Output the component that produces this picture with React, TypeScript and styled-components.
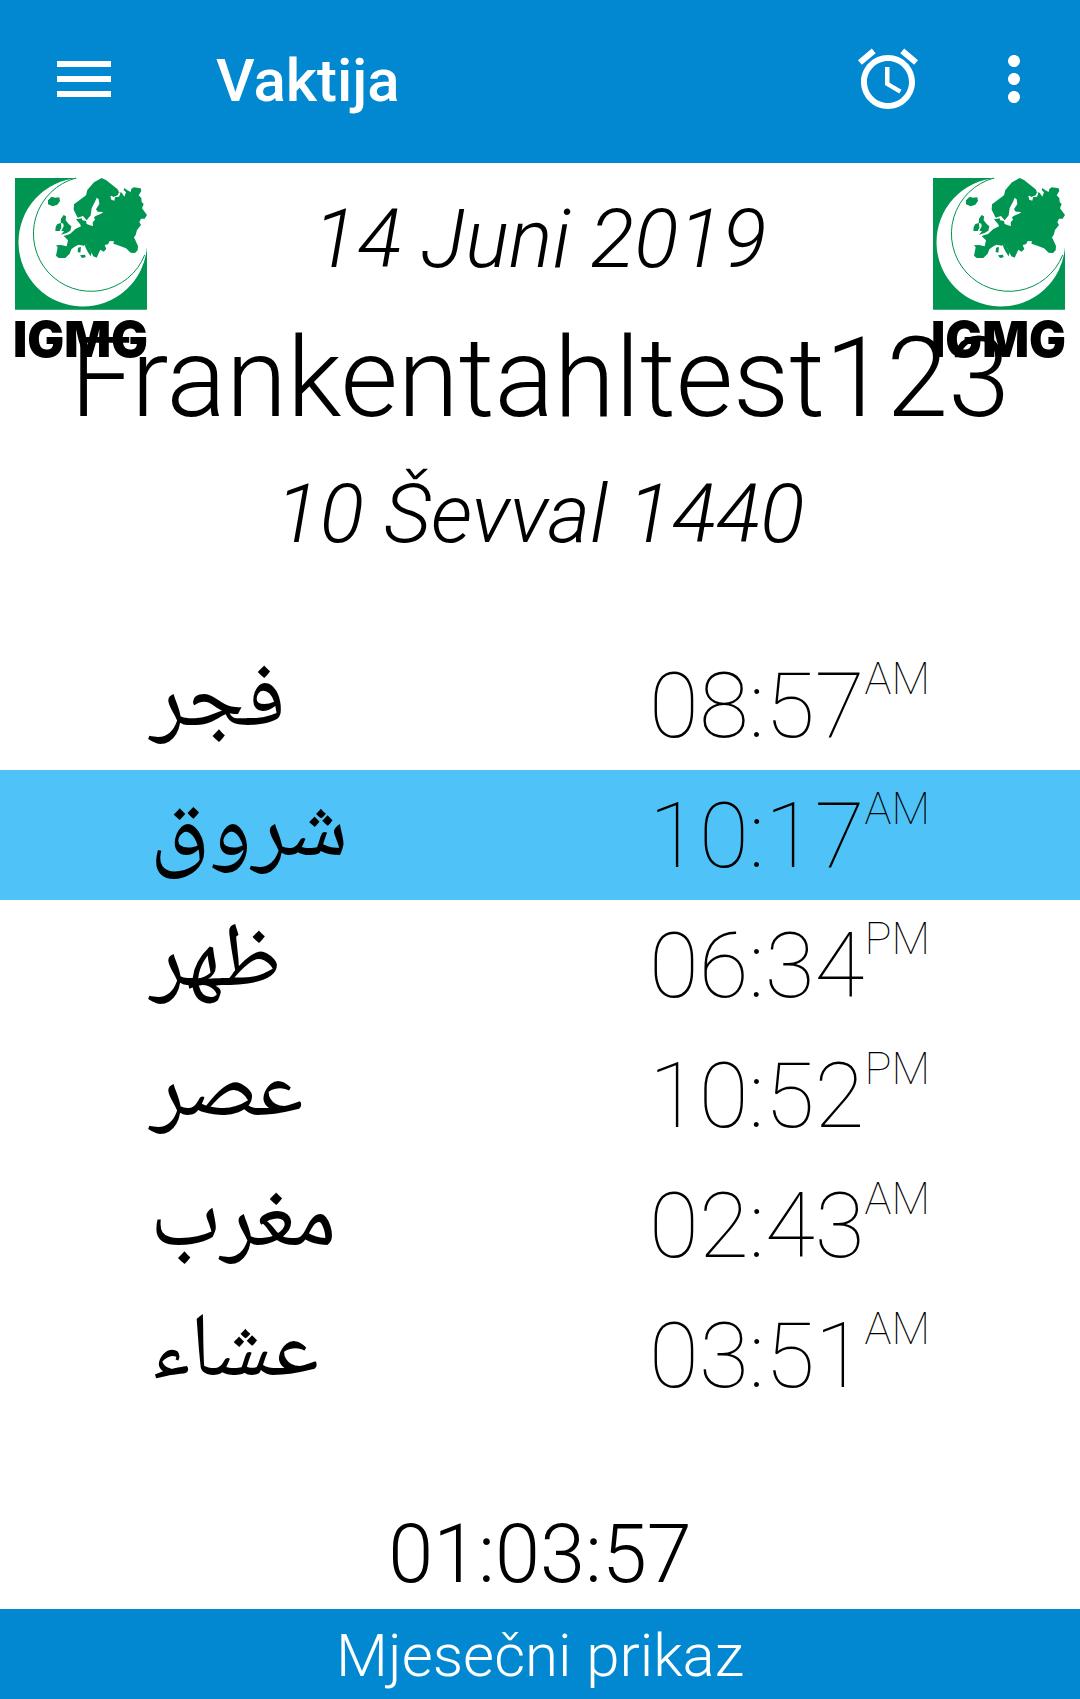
import React from 'react';
import styled, { createGlobalStyle } from 'styled-components';

const Global = createGlobalStyle`
  * { box-sizing: border-box; }
  body { margin: 0; background: #fff; color: #000; font-family: Roboto, "Liberation Sans", sans-serif; }
`;

const Screen = styled.div`
  display: flex;
  flex-direction: column;
  min-height: 100vh;
`;

const AppBar = styled.header`
  display: flex;
  align-items: center;
  height: 163px;
  padding: 0 12px 5px 48px;
  background: #0288d1;
  color: #fff;
`;

const Title = styled.h1`
  flex: 1;
  margin: 0 0 0 96px;
  padding-top: 4px;
  font-size: 60px;
  font-weight: 500;
  line-height: 72px;
`;

const IconButton = styled.button<{ $wide?: boolean }>`
  display: flex;
  justify-content: center;
  width: ${(p) => (p.$wide ? 108 : 72)}px;
  margin-left: ${(p) => (p.$wide ? 36 : 0)}px;
  padding: 0;
  border: 0;
  background: none;
  color: inherit;
  svg { width: 72px; height: 72px; fill: currentColor; }
`;

const Heading = styled.section`
  position: relative;
  padding: 28px 0 0;
  text-align: center;
`;

const LogoBox = styled.div<{ $side: 'left' | 'right' }>`
  position: absolute;
  top: 15px;
  ${(p) => p.$side}: 15px;
  svg { display: block; width: 132px; height: 180px; overflow: visible; }
`;

const DateLine = styled.p`
  position: relative;
  margin: 0;
  font-size: 82px;
  font-style: italic;
  font-weight: 300;
  line-height: 96px;
`;

const City = styled.h2`
  position: relative;
  margin: 0;
  padding: 28px 0 24px;
  font-size: 111px;
  font-weight: 300;
  line-height: 127px;
`;

const Times = styled.table`
  width: 100%;
  margin-top: 78px;
  border-collapse: collapse;
  table-layout: fixed;
`;

const Row = styled.tr<{ $active: boolean }>`
  height: 130px;
  background: ${(p) => (p.$active ? '#4fc3f7' : 'transparent')};
`;

const Name = styled.th`
  padding: 2px 0 0 150px;
  font-family: "Noto Naskh Arabic", "DejaVu Sans", sans-serif;
  font-size: 91px;
  font-weight: 400;
  line-height: 100px;
  text-align: left;
`;

const Time = styled.td`
  padding: 2px 150px 0 0;
  font-size: 91px;
  font-weight: 100;
  line-height: 108px;
  text-align: right;
`;

const Clock = styled.div`
  display: flex;
  justify-content: flex-end;
`;

const Period = styled.span`
  font-size: 45px;
  line-height: 54px;
`;

const Countdown = styled.p`
  margin: auto 0 0;
  padding-bottom: 6px;
  font-size: 81px;
  font-weight: 300;
  line-height: 96px;
  text-align: center;
`;

const MonthButton = styled.button`
  height: 90px;
  padding: 4px 0 0;
  border: 0;
  background: #0288d1;
  color: #fff;
  font-family: inherit;
  font-size: 60px;
  font-weight: 300;
  line-height: 72px;
`;

const Wordmark = styled.text`
  font-family: Inter, sans-serif;
  font-size: 147px;
  font-weight: 900;
`;

const Logo = () => (
  <svg viewBox="45 39 396 540" role="img" aria-label="IGMG">
    <path fill="#009550" d="M45 39H235A193 193 0 1 0 441 245V434H45Z" />
    <path fill="none" stroke="#009550" strokeWidth="3" d="M228 39A173 173 0 1 0 434 270" />
    <path
      fill="#009550"
      d="M305 39L318 45 333 57 353 73 357 82 353 91 340 96 335 92 331 94 334 104 343 107 345 97 357 95 361 86 358 82 365 83 373 95 378 82 371 75 373 69 382 76 392 81 394 72 401 67 422 70 424 78 416 91 424 99 425 111 431 117 426 130 441 150 434 161 423 161 418 171 423 180 411 195 407 210 402 217 414 243 413 256 405 264 392 263 378 250 352 240 340 236 342 229 329 228 324 238 314 240 319 252 311 260 301 254 290 278 280 274 268 250 258 237 252 242 235 239 224 245 214 253 209 266 196 279 176 279 168 272 173 247 168 241 183 240 200 244 204 226 191 213 210 207 226 192 243 184 240 177 228 163 245 160 247 166 258 168 260 177 270 181 279 183 278 172 285 164 282 157 287 153 303 146 310 141 293 140 288 133 298 117 296 103 290 98 285 110 275 129 272 151 260 166 249 153 233 158 221 134 222 118 246 100 258 91 262 75 282 52Z"
    />
    <path fill="#009550" d="M144 106L155 95 165 98 178 97 180 108 172 119 158 124 144 118Z" />
    <path fill="#009550" d="M183 161L191 150 198 154 197 166 206 177 214 184 211 197 200 204 183 209 192 199 184 197 191 184 190 176 182 173Z" />
    <path fill="#009550" d="M172 177L183 174 184 188 179 198 166 198 167 186Z" />
    <path fill="#009550" d="M234 248L243 246 241 263 233 261ZM253 235L263 241 275 262 272 274 264 262 257 248ZM240 271L255 269 257 277 246 279Z" />
    <Wordmark x="39" y="577">IGMG</Wordmark>
  </svg>
);

const PRAYERS = [
  { name: 'فجر', time: '08:57', period: 'AM' },
  { name: 'شروق', time: '10:17', period: 'AM', active: true },
  { name: 'ظهر', time: '06:34', period: 'PM' },
  { name: 'عصر', time: '10:52', period: 'PM' },
  { name: 'مغرب', time: '02:43', period: 'AM' },
  { name: 'عشاء', time: '03:51', period: 'AM' },
];

export default function App() {
  return (
    <Screen>
      <Global />
      <AppBar>
        <IconButton aria-label="Menu">
          <svg viewBox="0 0 24 24"><path d="M3 18h18v-2H3v2zm0-5h18v-2H3v2zm0-7v2h18V6H3z" /></svg>
        </IconButton>
        <Title>Vaktija</Title>
        <IconButton aria-label="Alarm">
          <svg viewBox="0 0 24 24"><path d="M22 5.720l-4.600-3.860-1.290 1.530 4.600 3.860L22 5.720zM7.880 3.390L6.600 1.860 2 5.710l1.290 1.530 4.590-3.850zM12.500 8H11v6l4.750 2.850.75-1.230-4-2.370V8zM12 4c-4.970 0-9 4.030-9 9s4.020 9 9 9c4.970 0 9-4.030 9-9s-4.030-9-9-9zm0 16c-3.870 0-7-3.130-7-7s3.130-7 7-7 7 3.130 7 7-3.130 7-7 7z" /></svg>
        </IconButton>
        <IconButton $wide aria-label="More">
          <svg viewBox="0 0 24 24"><path d="M12 8c1.100 0 2-.9 2-2s-.9-2-2-2-2 .9-2 2 .9 2 2 2zm0 2c-1.100 0-2 .9-2 2s.9 2 2 2 2-.9 2-2-.9-2-2-2zm0 6c-1.100 0-2 .9-2 2s.9 2 2 2 2-.9 2-2-.9-2-2-2z" /></svg>
        </IconButton>
      </AppBar>
      <Heading>
        <LogoBox $side="left"><Logo /></LogoBox>
        <LogoBox $side="right"><Logo /></LogoBox>
        <DateLine>14 Juni 2019</DateLine>
        <City>Frankentahltest123</City>
        <DateLine>10 Ševval 1440</DateLine>
      </Heading>
      <Times>
        <tbody>
          {PRAYERS.map((p) => (
            <Row key={p.time} $active={!!p.active}>
              <Name scope="row" lang="ar">{p.name}</Name>
              <Time>
                <Clock>{p.time}<Period>{p.period}</Period></Clock>
              </Time>
            </Row>
          ))}
        </tbody>
      </Times>
      <Countdown>01:03:57</Countdown>
      <MonthButton>Mjesečni prikaz</MonthButton>
    </Screen>
  );
}
